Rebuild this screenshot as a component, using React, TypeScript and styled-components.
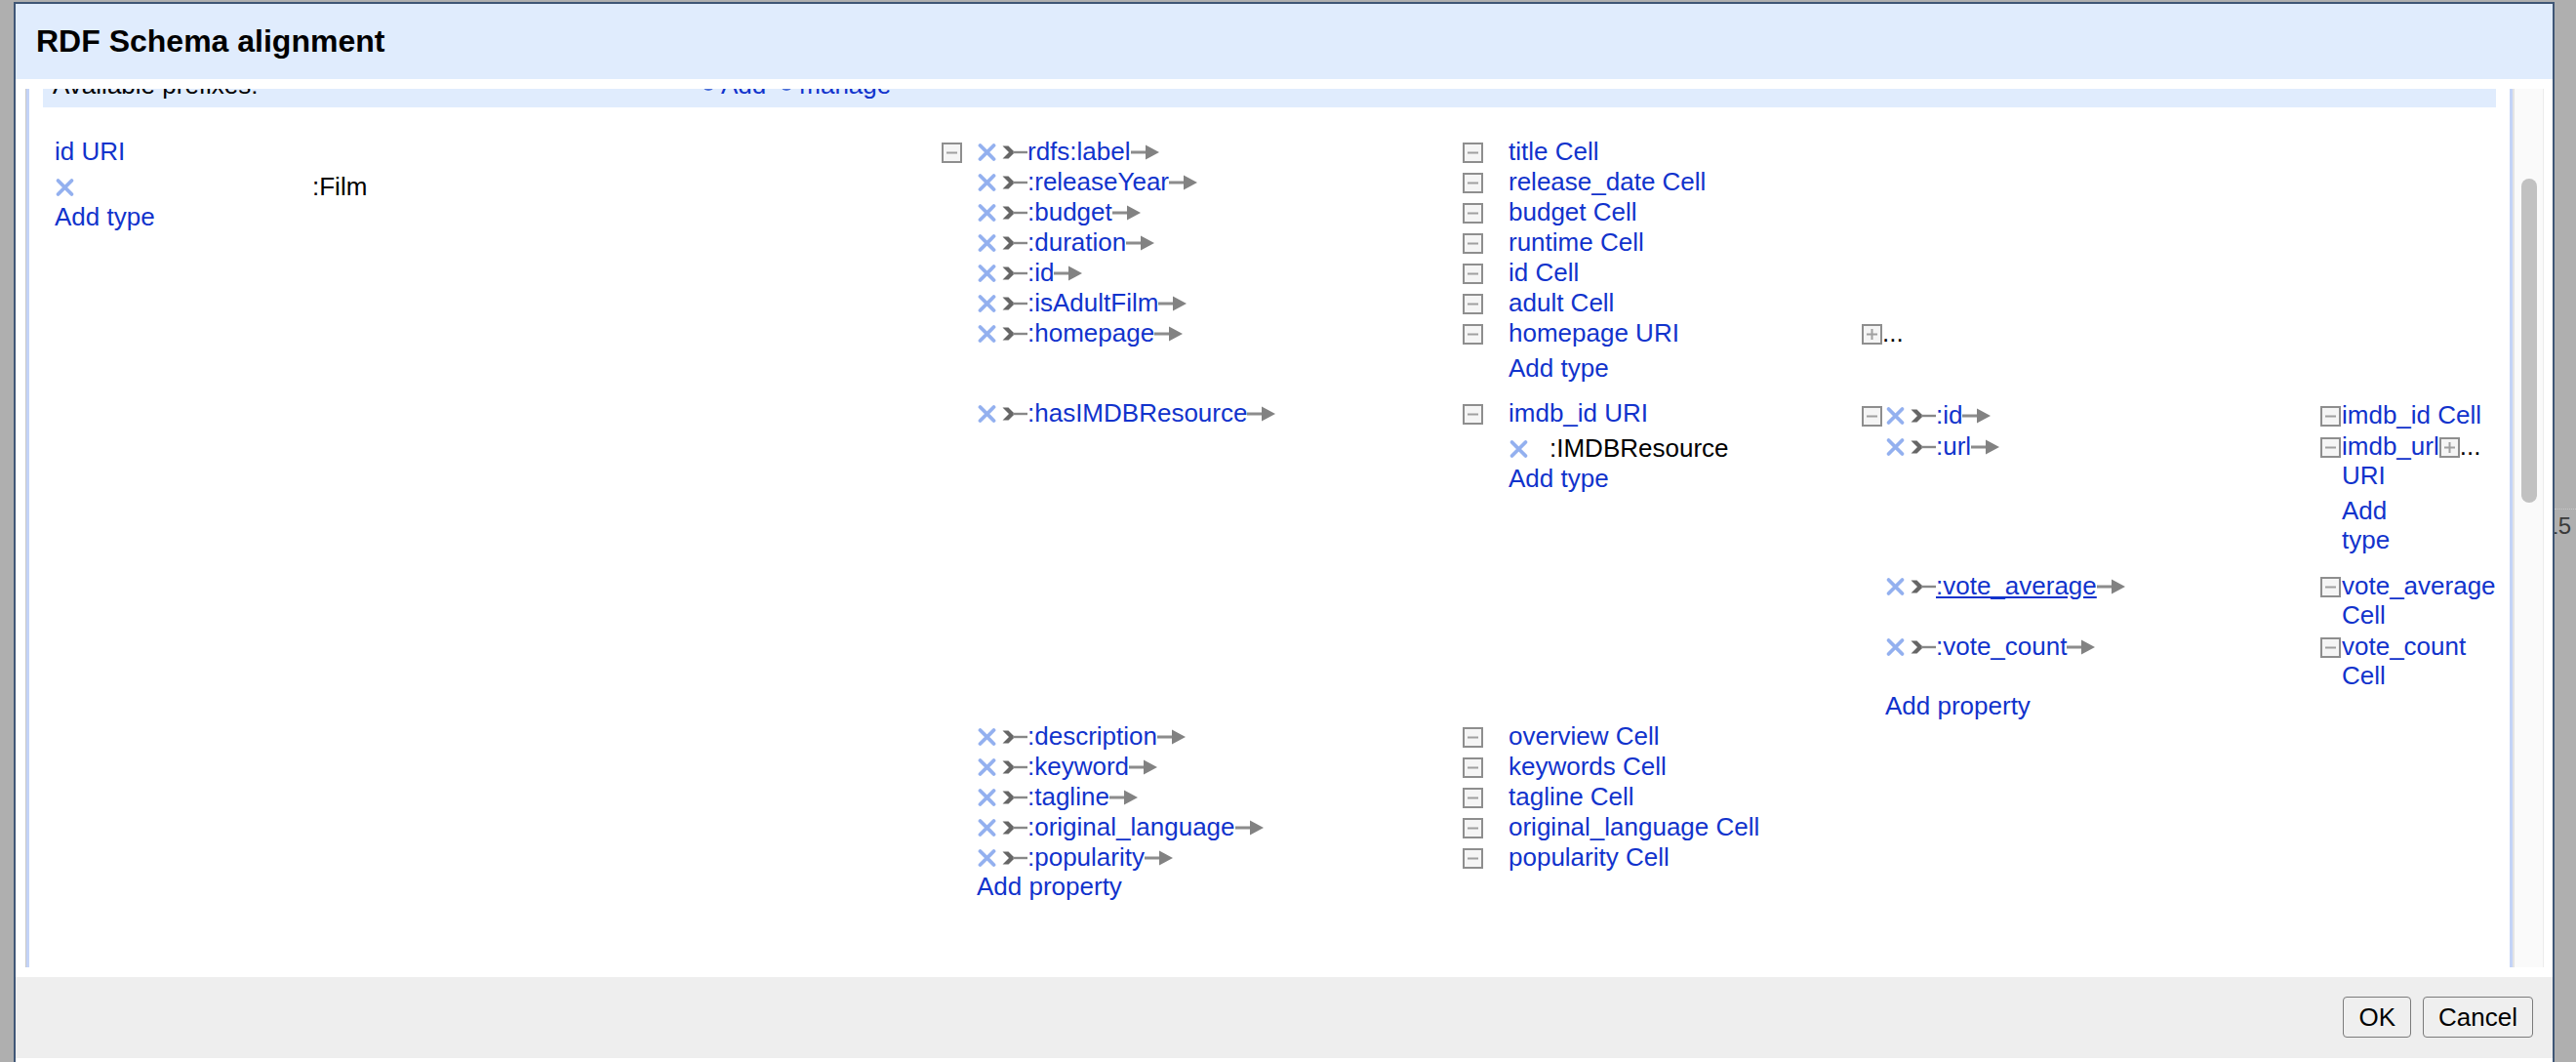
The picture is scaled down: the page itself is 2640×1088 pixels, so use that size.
import { useLayoutEffect, useRef } from "react";
import styled, { createGlobalStyle } from "styled-components";

type SchemaNode = {
  label: string;
  types?: string[];
  expand?: boolean;
  fit?: boolean;
  children?: Property[];
};

type Property = { name: string; target: SchemaNode; hover?: boolean };

type Level = {
  boxCol: number;
  propW: number;
  tBoxCol: number;
  detailW: number;
  pad: number;
};

const MAIN: Level = { boxCol: 36, propW: 498, tBoxCol: 47, detailW: 362, pad: 0.5 };
const NESTED: Level = { boxCol: 24, propW: 446, tBoxCol: 22, detailW: 160, pad: 1 };

const imdbProps: Property[] = [
  { name: ":id", target: { label: "imdb_id Cell" } },
  {
    name: ":url",
    target: { label: "imdb_url URI", types: [], expand: true, fit: true },
  },
  { name: ":vote_average", hover: true, target: { label: "vote_average Cell" } },
  { name: ":vote_count", target: { label: "vote_count Cell" } },
];

const filmProps: Property[] = [
  { name: "rdfs:label", target: { label: "title Cell" } },
  { name: ":releaseYear", target: { label: "release_date Cell" } },
  { name: ":budget", target: { label: "budget Cell" } },
  { name: ":duration", target: { label: "runtime Cell" } },
  { name: ":id", target: { label: "id Cell" } },
  { name: ":isAdultFilm", target: { label: "adult Cell" } },
  { name: ":homepage", target: { label: "homepage URI", types: [], expand: true } },
  {
    name: ":hasIMDBResource",
    target: { label: "imdb_id URI", types: [":IMDBResource"], children: imdbProps },
  },
  { name: ":description", target: { label: "overview Cell" } },
  { name: ":keyword", target: { label: "keywords Cell" } },
  { name: ":tagline", target: { label: "tagline Cell" } },
  { name: ":original_language", target: { label: "original_language Cell" } },
  { name: ":popularity", target: { label: "popularity Cell" } },
];

const GlobalStyle = createGlobalStyle`
  *, *::before, *::after { box-sizing: border-box; }
  html, body { margin: 0; height: 100%; overflow: hidden; }
  body {
    background: #afafaf;
    font-family: "Liberation Sans", Arial, Helvetica, sans-serif;
  }
`;

const Page = styled.div`
  display: flex;
  align-items: flex-start;
  padding-top: 2px;
`;

const Dialog = styled.div`
  flex: none;
  width: 2604px;
  margin-left: 14px;
  border: 2px solid #3f5676;
  background: #fff;
  display: flex;
  flex-direction: column;
  padding-bottom: 40px;
`;

const Header = styled.div`
  height: 77px;
  background: #e0ecfd;
  display: flex;
  align-items: center;
  padding-left: 21px;
`;

const Title = styled.h2`
  margin: 0;
  font-size: 32px;
  font-weight: bold;
  color: #000;
`;

const Body = styled.div`
  height: 920px;
  padding: 10px 9px 10px 10px;
  display: flex;
`;

const ScrollFrame = styled.div`
  flex: 1;
  min-width: 0;
  display: flex;
  border-left: 1px solid #c9c9c9;
`;

const Panel = styled.div`
  flex: 1;
  min-width: 0;
  position: relative;
  overflow: hidden;
  border-left: 3px solid #c3d3f7;
  border-right: 3px solid #c3d3f7;
  font-size: 26px;
  line-height: 30px;
  color: #000;
`;

const Track = styled.div`
  flex: none;
  width: 32px;
  background: #fafafa;
  border-left: 2px solid #e4e4e4;
  border-right: 1px solid #ececec;
  padding-left: 7px;
`;

const Thumb = styled.div`
  width: 16px;
  height: 332px;
  margin-top: 92px;
  border-radius: 8px;
  background: #c1c1c1;
`;

const PrefixBar = styled.div`
  margin: 0 14px;
  background: #e0ecfd;
  padding: 8px 10px;
  display: flex;
  white-space: nowrap;
`;

const PrefixLabel = styled.span`
  flex: none;
  width: 665px;
`;

const PrefixLink = styled.a`
  color: #1133cc;
  text-decoration: none;
  margin-right: 14px;
  display: inline-flex;
  align-items: center;
  gap: 6px;
`;

const Schema = styled.div`
  margin-top: 29px;
  padding-bottom: 1500px;
`;

const RootRow = styled.div`
  display: flex;
  align-items: flex-start;
`;

const RootCell = styled.div`
  flex: none;
  width: 935px;
  padding: 0.5px 0 0 26px;
`;

const PropTable = styled.div`
  display: flex;
  align-items: flex-start;
  flex: none;
`;

const CollapseCol = styled.div<{ $w: number; $pad: number }>`
  flex: none;
  width: ${(p) => p.$w}px;
  padding-top: ${(p) => p.$pad}px;
`;

const Rows = styled.div`
  display: flex;
  flex-direction: column;
`;

const PropRow = styled.div<{ $pad: number }>`
  display: flex;
  align-items: flex-start;
  padding: ${(p) => p.$pad}px 0;
`;

const PropCell = styled.div<{ $w: number }>`
  flex: none;
  width: ${(p) => p.$w}px;
`;

const TargetCell = styled.div`
  flex: none;
  display: flex;
  align-items: flex-start;
`;

const TargetBoxCol = styled.div<{ $w: number }>`
  flex: none;
  width: ${(p) => p.$w}px;
`;

const Detail = styled.div<{ $w?: number }>`
  flex: none;
  width: ${(p) => (p.$w ? `${p.$w}px` : "min-content")};
`;

const Nested = styled.div`
  flex: none;
  padding-top: 1px;
`;

const Line = styled.div`
  line-height: 30px;
  white-space: nowrap;
`;

const Wrap = styled.div`
  line-height: 30px;
`;

const Link = styled.a<{ $hover?: boolean }>`
  color: #1133cc;
  cursor: pointer;
  text-decoration: ${(p) => (p.$hover ? "underline" : "none")};
`;

const TypeBlock = styled.div`
  margin: 6px 0 15px;
`;

const TypeRow = styled.div<{ $w: number }>`
  display: grid;
  grid-template-columns: ${(p) => p.$w}px max-content;
  line-height: 31px;
  white-space: nowrap;
`;

const Svg = styled.svg<{ $gap?: number }>`
  vertical-align: -3px;
  margin-right: ${(p) => p.$gap ?? 0}px;
`;

const Gutter = styled.div`
  flex: 1;
  min-width: 0;
  overflow: hidden;
  padding-top: 519px;
`;

const GutterRow = styled.div`
  border-top: 1px dotted #c8c8c8;
  display: flex;
  justify-content: flex-end;
  padding-right: 5px;
  font-size: 24px;
  line-height: 33px;
  color: #3a3a3a;
  white-space: nowrap;
`;

const Footer = styled.div`
  height: 83px;
  background: #eeeeee;
  display: flex;
  justify-content: flex-end;
  align-items: flex-start;
  gap: 12px;
  padding: 20px 20px 0;
`;

const Button = styled.button`
  height: 42px;
  padding: 0 15px;
  font-family: "Liberation Sans", Arial, Helvetica, sans-serif;
  font-size: 26px;
  color: #000;
  background: #efefef;
  border: 1px solid #7b7b7b;
  border-radius: 4px;
`;

const RemoveIcon = ({ gap }: { gap?: number }) => (
  <Svg $gap={gap} width="21" height="22" viewBox="0 0 21 22">
    <path
      d="M3.5 4 L17.5 18 M17.5 4 L3.5 18"
      stroke="#93b0ef"
      strokeWidth="3.8"
      strokeLinecap="round"
    />
  </Svg>
);

const ArrowStart = () => (
  <Svg width="26" height="22" viewBox="0 0 26 22">
    <polygon points="0.5,4.5 6.5,4.5 13,11 6.5,17.5 0.5,17.5 7,11" fill="#666" />
    <rect x="11" y="9.8" width="15" height="2.4" fill="#888" />
  </Svg>
);

const ArrowEnd = () => (
  <Svg width="29" height="22" viewBox="0 0 29 22">
    <rect x="0" y="9.5" width="18" height="3" fill="#8c8c8c" />
    <polygon points="15,3.5 29,11 15,18.5" fill="#828282" />
  </Svg>
);

const Toggle = ({ plus }: { plus?: boolean }) => (
  <Svg width="21" height="21" viewBox="0 0 21 21">
    <rect x="1" y="1" width="19" height="19" fill="#f5f5f5" stroke="#8e8e8e" strokeWidth="2" />
    <rect x="5" y="9.5" width="11" height="2" fill="#a0a0a0" />
    {plus && <rect x="9.5" y="5" width="2" height="11" fill="#a0a0a0" />}
  </Svg>
);

const SmallPlus = () => (
  <svg width="14" height="14" viewBox="0 0 14 14">
    <circle cx="7" cy="7" r="6" fill="#4a6fd8" />
    <path d="M7 3.5 V10.5 M3.5 7 H10.5" stroke="#fff" strokeWidth="1.6" />
  </svg>
);

const Types = ({ types, col }: { types: string[]; col: number }) => (
  <TypeBlock>
    {types.map((t) => (
      <TypeRow key={t} $w={col}>
        <span>
          <RemoveIcon />
        </span>
        <span>{t}</span>
      </TypeRow>
    ))}
    <Wrap>
      <Link>Add type</Link>
    </Wrap>
  </TypeBlock>
);

const TargetNode = ({ node, level }: { node: SchemaNode; level: Level }) => (
  <TargetCell>
    <TargetBoxCol $w={level.tBoxCol}>
      <Line>
        <Toggle />
      </Line>
    </TargetBoxCol>
    <Detail $w={node.fit ? undefined : level.detailW}>
      <Wrap>
        <Link>{node.label}</Link>
      </Wrap>
      {node.types && <Types types={node.types} col={42} />}
    </Detail>
    {node.expand && (
      <Line>
        <Toggle plus />
        ...
      </Line>
    )}
    {node.children && (
      <Nested>
        <PropertyList props={node.children} level={NESTED} />
      </Nested>
    )}
  </TargetCell>
);

const PropertyList = ({ props, level }: { props: Property[]; level: Level }) => (
  <PropTable>
    <CollapseCol $w={level.boxCol} $pad={level.pad}>
      <Line>
        <Toggle />
      </Line>
    </CollapseCol>
    <Rows>
      {props.map((p) => (
        <PropRow key={p.name} $pad={level.pad}>
          <PropCell $w={level.propW}>
            <Line>
              <RemoveIcon gap={5} />
              <ArrowStart />
              <Link $hover={p.hover}>{p.name}</Link>
              <ArrowEnd />
            </Line>
          </PropCell>
          <TargetNode node={p.target} level={level} />
        </PropRow>
      ))}
      <Line>
        <Link>Add property</Link>
      </Line>
    </Rows>
  </PropTable>
);

export default function App() {
  const panelRef = useRef<HTMLDivElement>(null);
  const barRef = useRef<HTMLDivElement>(null);

  // the skeleton is scrolled so only the bottom strip of the prefix bar shows
  useLayoutEffect(() => {
    const panel = panelRef.current;
    const bar = barRef.current;
    if (panel && bar) {
      panel.scrollTop = bar.offsetTop + bar.offsetHeight - 19;
    }
  }, []);

  return (
    <>
      <GlobalStyle />
      <Page>
        <Dialog>
          <Header>
            <Title>RDF Schema alignment</Title>
          </Header>
          <Body>
            <ScrollFrame>
              <Panel ref={panelRef}>
                <PrefixBar ref={barRef}>
                  <PrefixLabel>Available prefixes:</PrefixLabel>
                  <PrefixLink>
                    <SmallPlus />
                    Add
                  </PrefixLink>
                  <PrefixLink>
                    <SmallPlus />
                    manage
                  </PrefixLink>
                </PrefixBar>
                <Schema>
                  <RootRow>
                    <RootCell>
                      <Line>
                        <Link>id URI</Link>
                      </Line>
                      <Types types={[":Film"]} col={264} />
                    </RootCell>
                    <PropertyList props={filmProps} level={MAIN} />
                  </RootRow>
                </Schema>
              </Panel>
              <Track>
                <Thumb />
              </Track>
            </ScrollFrame>
          </Body>
          <Footer>
            <Button>OK</Button>
            <Button>Cancel</Button>
          </Footer>
        </Dialog>
        <Gutter>
          <GutterRow>15</GutterRow>
        </Gutter>
      </Page>
    </>
  );
}
